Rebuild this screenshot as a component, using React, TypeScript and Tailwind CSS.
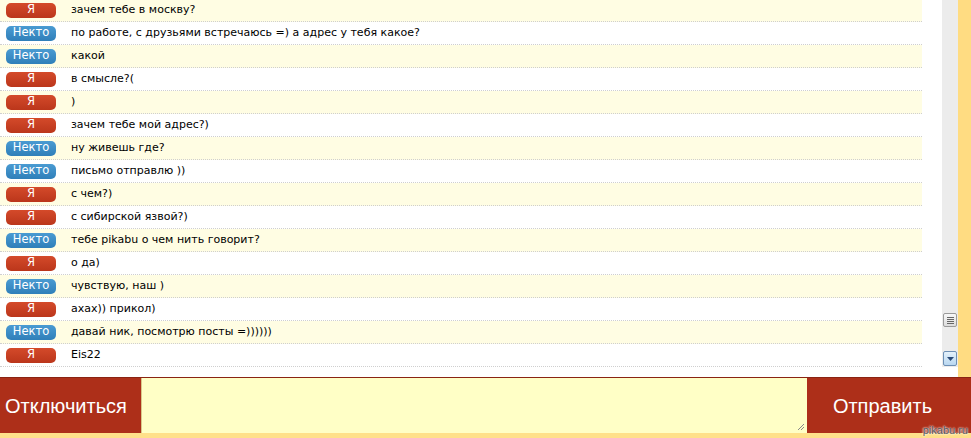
import React from "react";

type Msg = { me: boolean; text: string };

const msgs: Msg[] = [
  { me: true, text: "зачем тебе в москву?" },
  { me: false, text: "по работе, с друзьями встречаюсь =) а адрес у тебя какое?" },
  { me: false, text: "какой" },
  { me: true, text: "в смысле?(" },
  { me: true, text: ")" },
  { me: true, text: "зачем тебе мой адрес?)" },
  { me: false, text: "ну живешь где?" },
  { me: false, text: "письмо отправлю ))" },
  { me: true, text: "с чем?)" },
  { me: true, text: "с сибирской язвой?)" },
  { me: false, text: "тебе pikabu о чем нить говорит?" },
  { me: true, text: "о да)" },
  { me: false, text: "чувствую, наш )" },
  { me: true, text: "ахах)) прикол)" },
  { me: false, text: "давай ник, посмотрю посты =))))))" },
  { me: true, text: "Eis22" },
];

export default function App() {
  return (
    <div
      className="w-[971px] h-[438px] overflow-hidden bg-[#ffe08a] flex flex-col relative"
      style={{ fontFamily: '"DejaVu Sans", Verdana, sans-serif' }}
    >
      <div className="h-[377px] flex bg-white">
        <div className="w-[942px] h-full overflow-hidden bg-white">
          <div className="mt-[-1px] w-[922px]">
            {msgs.map((m, i) => (
              <div
                key={i}
                className={`h-[23px] flex items-center border-b border-dotted border-[#cfcfcf] ${
                  i % 2 === 0 ? "bg-[#fffde3]" : "bg-white"
                }`}
              >
                <div
                  className={`ml-[6px] w-[50px] h-[15px] rounded-[5px] flex items-center justify-center text-white text-[11.5px] leading-none ${
                    m.me
                      ? "bg-gradient-to-b from-[#d44a2a] to-[#bb361b]"
                      : "bg-gradient-to-b from-[#4a9bd2] to-[#2f7fb9]"
                  }`}
                >
                  {m.me ? "Я" : "Некто"}
                </div>
                <div className="ml-[15px] text-[11px] text-black whitespace-nowrap">{m.text}</div>
              </div>
            ))}
          </div>
        </div>
        <div className="w-[16px] h-[367px] bg-[#ececec] relative">
          <div className="absolute left-[1px] top-[313px] w-[14px] h-[14px] border border-[#9a9a9a] rounded-[2px] bg-gradient-to-b from-[#f8f8f8] to-[#dcdcdc] flex flex-col items-center justify-center gap-[1px]">
            <div className="w-[7px] h-[1px] bg-[#666]" />
            <div className="w-[7px] h-[1px] bg-[#666]" />
            <div className="w-[7px] h-[1px] bg-[#666]" />
            <div className="w-[7px] h-[1px] bg-[#666]" />
          </div>
          <div className="absolute left-[1px] top-[351px] w-[14px] h-[15px] border border-[#6d8fb5] rounded-[2px] bg-gradient-to-b from-[#e4f1fb] to-[#b9d7f0] flex items-center justify-center">
            <svg width="7" height="4" viewBox="0 0 7 4">
              <path d="M0 0 H7 L3.5 4 Z" fill="#2a4a78" />
            </svg>
          </div>
        </div>
        <div className="w-[13px] h-full bg-[#ffdc82]" />
      </div>
      <div className="h-[56px] flex bg-[#ad2f19] border-t border-[#8a2412]">
        <div
          className="w-[141px] flex items-center pl-[5px] text-white text-[20px]"
          style={{ fontFamily: '"Liberation Sans", Arial, sans-serif' }}
        >
          Отключиться
        </div>
        <div className="w-[666px] h-full bg-[#ffffc6] border-l border-[#d9c98a] relative">
          <svg className="absolute right-[2px] bottom-[2px]" width="9" height="9" viewBox="0 0 9 9">
            <path d="M8 2 L2 8 M8 5 L5 8" stroke="#888" strokeWidth="1" />
          </svg>
        </div>
        <div
          className="w-[151px] flex items-center justify-center text-white text-[20px]"
          style={{ fontFamily: '"Liberation Sans", Arial, sans-serif' }}
        >
          Отправить
        </div>
      </div>
      <div
        className="absolute right-[3px] bottom-[2px] text-[11px] text-[#555] leading-none"
        style={{
          fontFamily: '"Liberation Sans", Arial, sans-serif',
          textShadow: "0 0 2px #fff, 0 0 2px #fff",
        }}
      >
        pikabu.ru
      </div>
    </div>
  );
}
